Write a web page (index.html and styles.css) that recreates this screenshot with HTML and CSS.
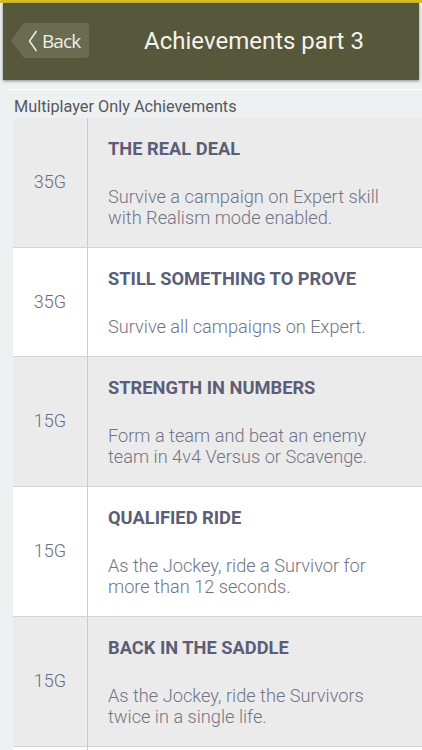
FILE: index.html
```html
<!DOCTYPE html>
<html>
<head>
<meta charset="utf-8">
<link rel="stylesheet" href="styles.css">
</head>
<body>
<div class="topline"></div>
<header class="bar">
  <div class="back">
    <svg class="chev" width="10" height="22" viewBox="0 0 10 22"><path d="M8.5 1 L1.5 11 L8.5 21" fill="none" stroke="#eeeee6" stroke-width="1.5"/></svg>
    <span class="back-text">Back</span>
  </div>
  <h1 class="title">Achievements part 3</h1>
</header>
<main class="content">
  <div class="section-title">Multiplayer Only Achievements</div>
  <div class="table">
    <div class="row gray">
      <div class="pts">35G</div>
      <div class="info"><div class="name">THE REAL DEAL</div><div class="desc">Survive a campaign on Expert skill with Realism mode enabled.</div></div>
    </div>
    <div class="row white">
      <div class="pts">35G</div>
      <div class="info"><div class="name">STILL SOMETHING TO PROVE</div><div class="desc">Survive all campaigns on Expert.</div></div>
    </div>
    <div class="row gray">
      <div class="pts">15G</div>
      <div class="info"><div class="name">STRENGTH IN NUMBERS</div><div class="desc">Form a team and beat an enemy team in 4v4 Versus or Scavenge.</div></div>
    </div>
    <div class="row white">
      <div class="pts">15G</div>
      <div class="info"><div class="name">QUALIFIED RIDE</div><div class="desc">As the Jockey, ride a Survivor for more than 12 seconds.</div></div>
    </div>
    <div class="row gray">
      <div class="pts">15G</div>
      <div class="info"><div class="name">BACK IN THE SADDLE</div><div class="desc">As the Jockey, ride the Survivors twice in a single life.</div></div>
    </div>
    <div class="row white stub">
      <div class="pts"></div>
      <div class="info"></div>
    </div>
  </div>
</main>
</body>
</html>
```
FILE: styles.css
```css
html, body {
  margin: 0;
  padding: 0;
}
body {
  background: #eef1f2;
  font-family: Roboto, "Liberation Sans", sans-serif;
  width: 422px;
  height: 750px;
  overflow: hidden;
}
.topline {
  height: 3px;
  background: #d6bf22;
}
.bar {
  margin: 0 3px;
  height: 77px;
  background: #57573b;
  box-shadow: 0 1px 3px rgba(0,0,0,0.45);
  display: flex;
  align-items: center;
  padding-bottom: 2px;
  box-sizing: border-box;
}
.back {
  margin-left: 8px;
  width: 78px;
  height: 35px;
  background: #6b6b52;
  clip-path: polygon(0 50%, 13px 0, 100% 0, 100% 100%, 13px 100%);
  border-radius: 0 3px 3px 0;
  display: flex;
  align-items: center;
  box-sizing: border-box;
  padding-left: 17px;
}
.chev {
  display: block;
  margin-right: 4px;
}
.back-text {
  font-family: "Open Sans", "DejaVu Sans", sans-serif;
  font-size: 19px;
  color: #eeeee6;
  letter-spacing: -0.9px;
}
.title {
  flex: 1;
  margin: 0;
  text-align: center;
  font-weight: 400;
  font-size: 24px;
  color: #f3f3ee;
}
.content {
  margin-top: 9px;
  margin-left: 8px;
  border-top: 1px solid #fbfcfc;
}
.section-title {
  padding: 8px 0 2px 6px;
  line-height: 18px;
  font-size: 16.3px;
  color: #57575d;
}
.table {
  margin-left: 5px;
}
.row {
  display: flex;
  border-bottom: 1px solid #d3d3db;
}
.row.gray { background: #ebebec; }
.row.white { background: #ffffff; }
.row.stub { height: 40px; }
.pts {
  width: 75px;
  flex: none;
  border-right: 1px solid #c9c9d2;
  display: flex;
  align-items: center;
  justify-content: center;
  font-size: 18px;
  font-weight: 300;
  color: #6a6c7c;
  padding-bottom: 2px;
  box-sizing: border-box;
}
.info {
  flex: 1;
  padding: 20px 22px 19px 20px;
}
.name {
  font-size: 18.3px;
  line-height: 22px;
  font-weight: 700;
  color: #5c5e77;
}
.desc {
  margin-top: 26px;
  font-size: 18.2px;
  line-height: 21px;
  color: #727485;
  font-weight: 300;
}
```
